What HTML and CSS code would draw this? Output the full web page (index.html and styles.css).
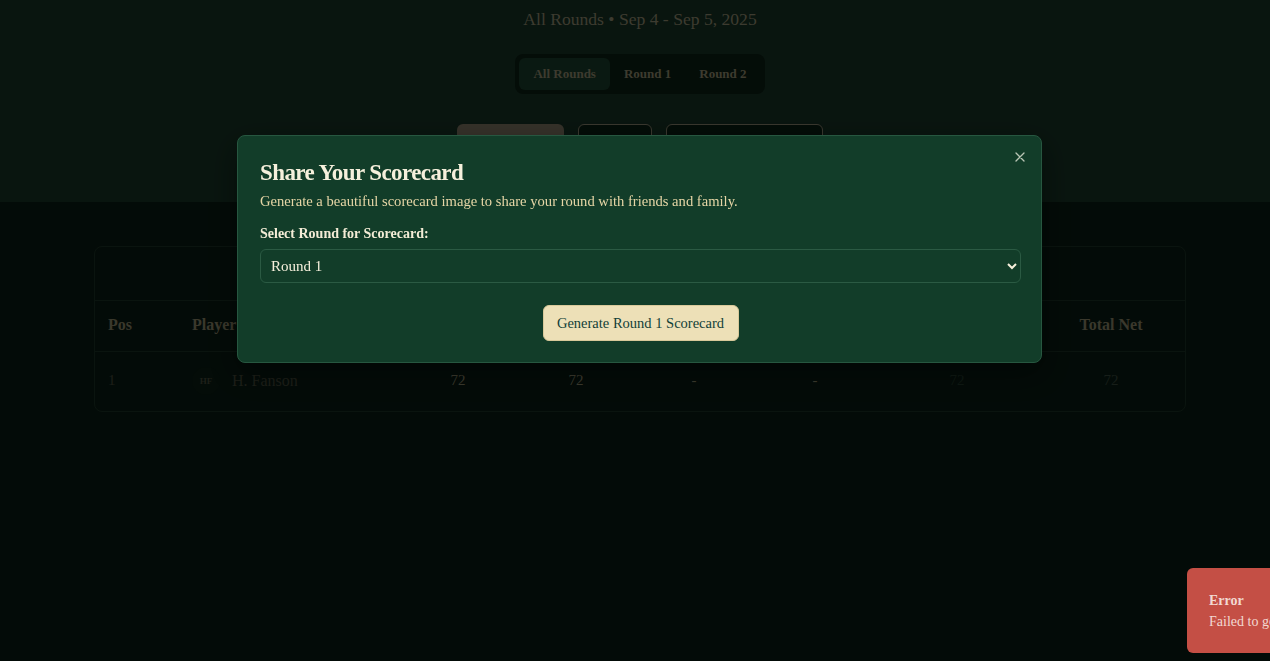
FILE: index.html
```html
<!DOCTYPE html>
<html lang="en">
<head>
<meta charset="utf-8">
<title>Leaderboard</title>
<link rel="stylesheet" href="styles.css">
</head>
<body>
<div class="page">
  <header class="hero">
    <p class="subtitle">All Rounds • Sep 4 - Sep 5, 2025</p>
    <div class="tabs">
      <button class="tab active">All Rounds</button>
      <button class="tab">Round 1</button>
      <button class="tab">Round 2</button>
    </div>
    <div class="actions">
      <button class="btn btn-primary">Leaderboard</button>
      <button class="btn btn-outline">Stats</button>
      <button class="btn btn-outline"><span class="dot"></span>Share Scorecard</button>
    </div>
  </header>

  <main class="main">
    <section class="card">
      <div class="card-head">Leaderboard</div>
      <div class="row head">
        <div class="cell left">Pos</div>
        <div class="cell left">Player</div>
        <div class="cell">R1</div>
        <div class="cell">R2</div>
        <div class="cell">N1</div>
        <div class="cell">N2</div>
        <div class="cell">Total</div>
        <div class="cell">Total Net</div>
      </div>
      <div class="row data">
        <div class="cell left dim">1</div>
        <div class="cell left player"><span class="avatar">HF</span><span class="dim name">H. Fanson</span></div>
        <div class="cell">72</div>
        <div class="cell">72</div>
        <div class="cell">-</div>
        <div class="cell">-</div>
        <div class="cell faint">72</div>
        <div class="cell dim2">72</div>
      </div>
    </section>
  </main>
</div>

<div class="overlay"></div>

<div class="modal" role="dialog">
  <button class="close" aria-label="Close">
    <svg width="10" height="10" viewBox="0 0 10 10"><path d="M1 1L9 9M9 1L1 9" stroke="currentColor" stroke-width="1.3" fill="none" stroke-linecap="round"/></svg>
  </button>
  <h2 class="modal-title">Share Your Scorecard</h2>
  <p class="modal-desc">Generate a beautiful scorecard image to share your round with friends and family.</p>
  <label class="field-label" for="round">Select Round for Scorecard:</label>
  <select id="round" class="select">
    <option>Round 1</option>
    <option>Round 2</option>
  </select>
  <div class="modal-foot">
    <button class="gen-btn">Generate Round 1 Scorecard</button>
  </div>
</div>

<div class="toast">
  <div class="toast-title">Error</div>
  <div class="toast-text">Failed to generate scorecard</div>
</div>
</body>
</html>
```

FILE: styles.css
```css
html, body {
  margin: 0;
  padding: 0;
  overflow: hidden;
  height: 100%;
}
body {
  background: #071710;
  font-family: "Liberation Serif", "DejaVu Serif", serif;
}
.page {
  width: 1280px;
}
.hero {
  background: #132b1f;
  height: 202px;
  box-sizing: border-box;
  display: flex;
  flex-direction: column;
  align-items: center;
  padding-top: 7px;
}
.subtitle {
  margin: 0;
  font-size: 17.6px;
  line-height: 24px;
  color: #7a7660;
}
.tabs {
  margin-top: 23px;
  display: flex;
  gap: 0;
  padding: 4px;
  background: #091a11;
  border-radius: 8px;
}
.tab {
  font-family: inherit;
  border: 0;
  background: transparent;
  font-size: 13px;
  font-weight: bold;
  color: #7a765e;
  height: 32px;
  padding: 0 14px;
  border-radius: 6px;
}
.tab.active {
  background: #153324;
}
.actions {
  margin-top: 30px;
  display: flex;
  gap: 14px;
}
.btn {
  font-family: inherit;
  font-size: 14px;
  height: 36px;
  border-radius: 6px;
  padding: 0 16px;
}
.btn-primary {
  width: 107px;
  background: #6c6454;
  border: 0;
  color: #0a1a12;
}
.btn-outline {
  background: #081a10;
  border: 1px solid #74705e;
  color: #74705a;
}
.btn-outline:nth-child(2) { width: 74px; }
.btn-outline:nth-child(3) { width: 157px; }
.dot {
  display: inline-block;
  width: 6px;
  height: 6px;
  border-radius: 50%;
  background: #74705a;
  margin-right: 6px;
}

.main {
  padding-top: 44px;
}
.card {
  width: 1092px;
  margin: 0 auto;
  box-sizing: border-box;
  border: 1px solid #15281e;
  border-radius: 8px;
}
.card-head {
  height: 53px;
  display: flex;
  align-items: center;
  justify-content: center;
  color: #74705a;
  font-size: 18px;
  font-weight: bold;
  border-bottom: 1px solid #15281e;
}
.row {
  display: grid;
  grid-template-columns: 84px 220px 118px 118px 118px 124px 160px 148px;
}
.row.head {
  height: 50px;
  border-bottom: 1px solid #15281e;
}
.row.data {
  height: 59px;
}
.cell {
  display: flex;
  align-items: center;
  justify-content: center;
  font-size: 15px;
  color: #78765e;
}
.head .cell {
  font-weight: bold;
  font-size: 16px;
  color: #747058;
  padding-bottom: 2px;
}
.cell.left {
  justify-content: flex-start;
  padding-left: 13px;
}
.data .cell {
  padding-bottom: 2px;
}
.dim { color: #3a3e30; }
.dim2 { color: #2e3c32; }
.faint { color: #1e3226; }
.player {
  gap: 12px;
}
.avatar {
  width: 28px;
  height: 28px;
  border-radius: 50%;
  background: #081810;
  color: #3a3e30;
  font-size: 9px;
  font-weight: bold;
  display: flex;
  align-items: center;
  justify-content: center;
}
.name { font-size: 16px; }

.overlay {
  position: fixed;
  inset: 0;
  background: rgba(0, 0, 0, 0.5);
}

.modal {
  position: fixed;
  left: 237px;
  top: 135px;
  width: 805px;
  box-sizing: border-box;
  background: #123d29;
  border: 1px solid #275740;
  border-radius: 8px;
  padding: 23px 20px 21px 22px;
  box-shadow: 0 10px 30px rgba(0,0,0,0.4);
}
.close {
  position: absolute;
  right: 15px;
  top: 15px;
  width: 12px;
  height: 12px;
  padding: 0;
  border: 0;
  background: transparent;
  color: #b9c6b5;
  display: flex;
  align-items: center;
  justify-content: center;
}
.modal-title {
  margin: 0;
  font-size: 23px;
  line-height: 28px;
  font-weight: bold;
  letter-spacing: -0.6px;
  color: #f6f0dc;
}
.modal-desc {
  margin: 5px 0 0;
  font-size: 14.6px;
  line-height: 18px;
  color: #e6d6a6;
}
.field-label {
  display: block;
  margin-top: 15px;
  font-size: 14px;
  line-height: 18px;
  font-weight: bold;
  color: #f3ecd6;
}
.select {
  display: block;
  margin-top: 6px;
  width: 100%;
  height: 34px;
  box-sizing: border-box;
  background: #123d29;
  color: #f6f0dc;
  border: 1px solid #2b5a43;
  border-radius: 6px;
  padding: 0 6px;
  font-family: inherit;
  font-size: 15px;
}
.modal-foot {
  display: flex;
  justify-content: center;
  margin-top: 22px;
}
.gen-btn {
  width: 196px;
  height: 36px;
  border: 1px solid #d8c99a;
  border-radius: 6px;
  background: #ede0b7;
  color: #123f38;
  font-family: inherit;
  font-size: 14.5px;
}

.toast {
  position: fixed;
  left: 1187px;
  top: 568px;
  width: 360px;
  height: 85px;
  box-sizing: border-box;
  background: #c44f45;
  border-radius: 6px;
  padding: 22px 22px;
  color: #f2d9d2;
  font-size: 14px;
  line-height: 21px;
}
.toast-title {
  font-weight: bold;
}
```
